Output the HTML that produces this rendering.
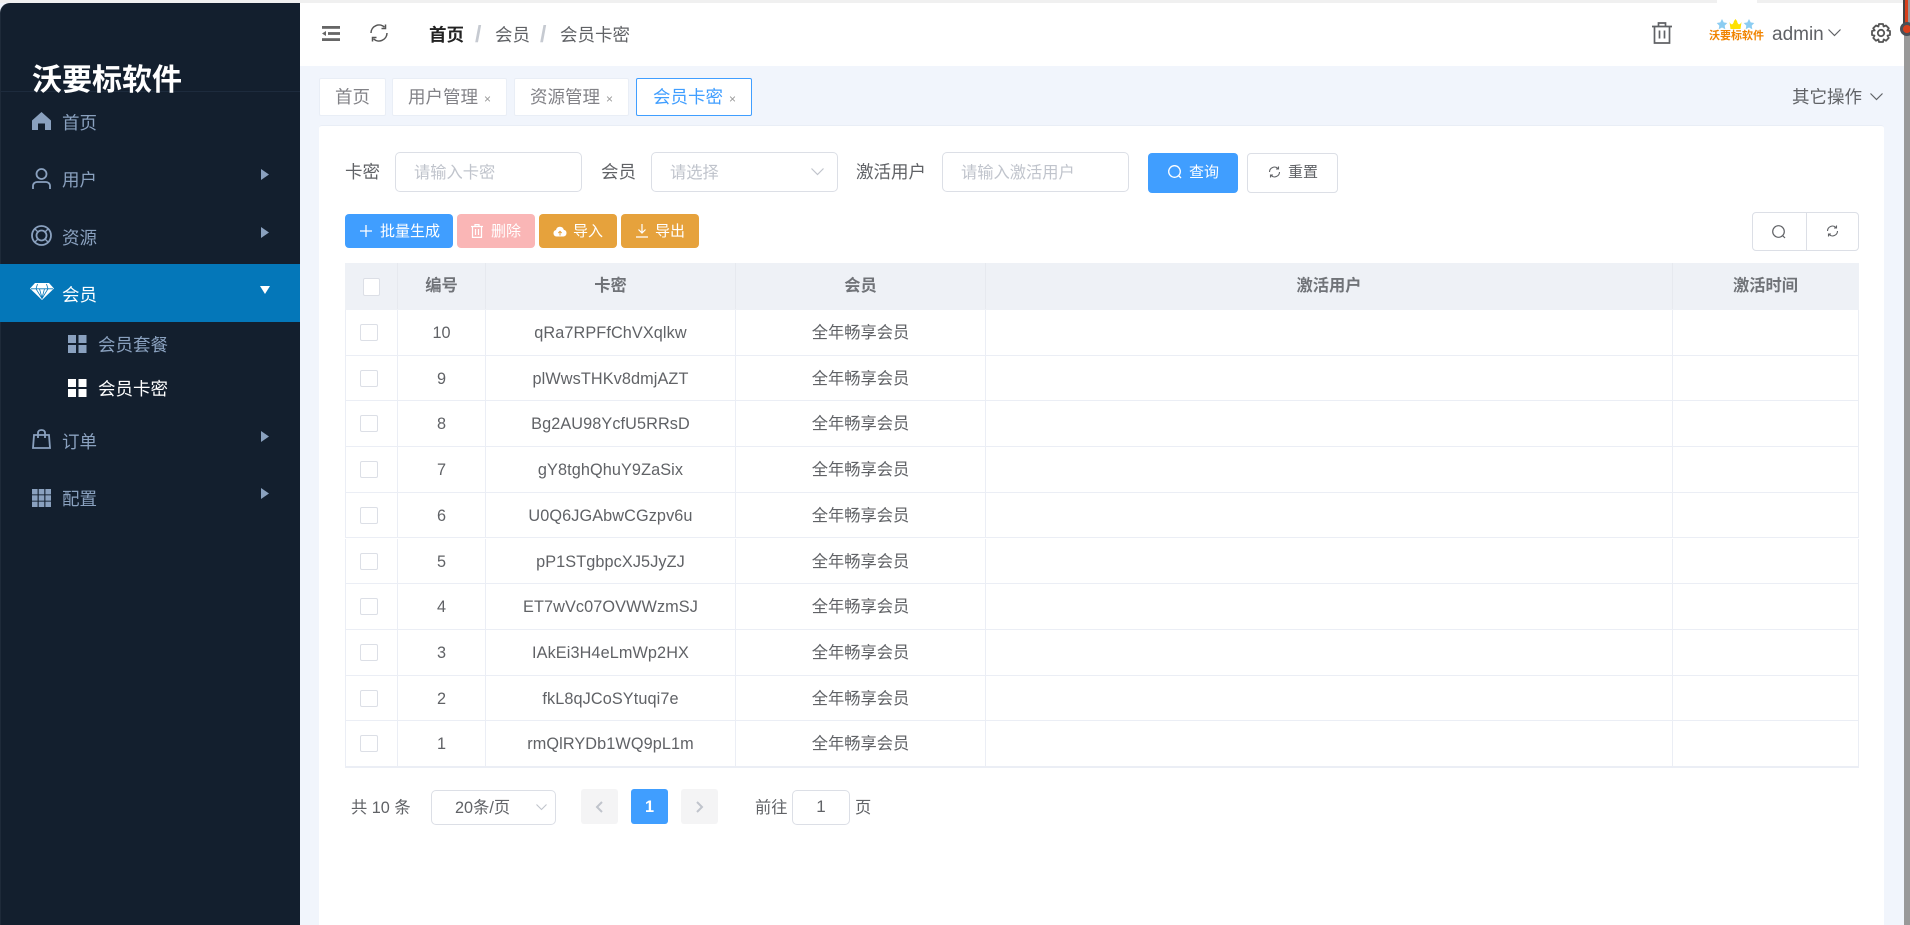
<!DOCTYPE html>
<html lang="zh-CN"><head><meta charset="utf-8"><title>沃要标软件</title>
<style>
*{box-sizing:border-box}
html,body{margin:0;padding:0;width:1910px;height:925px;overflow:hidden;background:#f1f5fc;font-family:"Liberation Sans","Noto Sans CJK SC",sans-serif;color:#606266}
.a{position:absolute}
.t{position:absolute;white-space:nowrap;line-height:24px;font-size:17.5px}
svg{position:absolute;display:block;overflow:visible}
.m{color:#8aa1bf}
.tab{position:absolute;top:78px;height:38px;background:#fff;border:1px solid #e9eef6;border-radius:2px}
.x{position:absolute;font-size:12px;color:#999;top:92px;line-height:14px}
.inp{position:absolute;background:#fff;border:1px solid #dcdfe6;border-radius:5px}
.ph{color:#c0c4cc;font-size:16.25px}
.btn{position:absolute;top:214px;height:34px;border-radius:4px}
.bt{position:absolute;top:220px;color:#fff;font-size:15px;line-height:24px;white-space:nowrap}
.row{position:absolute;left:345px;width:1514px;height:45.7px;border-bottom:1px solid #ebeef5;background:#fff;border-left:1px solid #ebeef5;border-right:1px solid #ebeef5}
.c{position:absolute;top:0;height:100%;text-align:center;font-size:16.25px;line-height:46px;color:#606266;white-space:nowrap;border-right:1px solid #ebeef5}
.c1{left:0;width:52px}.c2{left:52px;width:88px}.c3{left:140px;width:250px;letter-spacing:.1px}.c4{left:390px;width:250px}.c5{left:640px;width:687px}.c6{left:1326px;width:187px;border-right:0}
.cb{position:absolute;left:14px;top:14px;width:18px;height:17px;border:1px solid #dcdfe6;border-radius:2px;background:#fff}
.head .c{font-weight:bold;color:#707378;line-height:47px;border-right-color:#e6e9ef;letter-spacing:0}
</style></head><body>

<!-- top strip -->
<div class="a" style="left:0;top:0;width:1910px;height:3px;background:#f0f0f0"></div>
<div class="a" style="left:1717px;top:0;width:40px;height:3px;background:#fff"></div>
<!-- header -->
<div class="a" style="left:300px;top:3px;width:1604px;height:63px;background:#fff"></div>
<!-- sidebar -->
<div class="a" style="left:0;top:3px;width:300px;height:922px;background:#131f2e;border-top-left-radius:10px;border-left:1px solid #1e2a39"></div>
<div class="a" style="left:1px;top:91px;width:299px;height:1px;background:#1d2b3d"></div>
<div class="t" style="left:32px;top:63px;font-size:30px;line-height:36px;font-weight:bold;color:#fff">沃要标软件</div>

<!-- menu -->
<svg style="left:32px;top:112px" width="19" height="18" viewBox="0 0 19 18"><path d="M9.5 0L19 8.5V18H13V11.5H6V18H0V8.5Z" fill="#8aa1bf"/></svg>
<div class="t m" style="left:62px;top:111px">首页</div>

<svg style="left:32px;top:168px" width="19" height="21" viewBox="0 0 19 21" fill="none" stroke="#8aa1bf" stroke-width="1.8"><circle cx="9.5" cy="6" r="5"/><path d="M1 21V18C1 15.5 3 14 5 14H14C16 14 18 15.5 18 18V21"/></svg>
<div class="t m" style="left:62px;top:168px">用户</div>
<svg style="left:261px;top:169px" width="8" height="11" viewBox="0 0 8 11"><path d="M0 0L8 5.5L0 11Z" fill="#8aa1bf"/></svg>

<svg style="left:31px;top:225px" width="21" height="21" viewBox="0 0 21 21" fill="none" stroke="#8aa1bf" stroke-width="1.8"><circle cx="10.5" cy="10.5" r="9.5"/><circle cx="10.5" cy="10.5" r="5"/><path d="M4 4L7 7M17 4L14 7M4 17L7 14M17 17L14 14" stroke-width="1.4"/></svg>
<div class="t m" style="left:62px;top:226px">资源</div>
<svg style="left:261px;top:227px" width="8" height="11" viewBox="0 0 8 11"><path d="M0 0L8 5.5L0 11Z" fill="#8aa1bf"/></svg>

<div class="a" style="left:0;top:264px;width:300px;height:58px;background:#0477b9"></div>
<svg style="left:30px;top:283px" width="24" height="17" viewBox="0 0 24 17"><path d="M5 0H19L24 5.5L12 17L0 5.5Z" fill="#fff"/><path d="M1 5.8H23M7.5 1L6 5.8L12 15.5L18 5.8L16.5 1M9.5 5.8L12 15M14.500 5.8L12 15" stroke="#0477b9" stroke-width=".8" fill="none"/></svg>
<div class="t" style="left:62px;top:283px;color:#fff">会员</div>
<svg style="left:260px;top:286px" width="10" height="8" viewBox="0 0 10 8"><path d="M0 0H10L5 8Z" fill="#fff"/></svg>

<svg style="left:68px;top:335px" width="19" height="18" viewBox="0 0 19 18" fill="#8aa1bf"><rect width="8" height="8"/><rect x="10.5" width="8" height="8"/><rect y="10" width="8" height="8"/><rect x="10.5" y="10" width="8" height="8"/></svg>
<div class="t m" style="left:98px;top:333px">会员套餐</div>
<svg style="left:68px;top:379px" width="19" height="18" viewBox="0 0 19 18" fill="#fff"><rect width="8" height="8"/><rect x="10.5" width="8" height="8"/><rect y="10" width="8" height="8"/><rect x="10.5" y="10" width="8" height="8"/></svg>
<div class="t" style="left:98px;top:377px;color:#fff">会员卡密</div>

<svg style="left:32px;top:429px" width="19" height="20" viewBox="0 0 19 20" fill="none" stroke="#8aa1bf" stroke-width="1.8"><path d="M2 6H17L18 19H1Z"/><path d="M6 9V4C6 2 7.5 1 9.5 1S13 2 13 4V9"/></svg>
<div class="t m" style="left:62px;top:430px">订单</div>
<svg style="left:261px;top:431px" width="8" height="11" viewBox="0 0 8 11"><path d="M0 0L8 5.5L0 11Z" fill="#8aa1bf"/></svg>

<svg style="left:32px;top:489px" width="19" height="18" viewBox="0 0 19 18" fill="#8aa1bf"><rect width="5.6" height="5.400"/><rect x="6.700" width="5.600" height="5.400"/><rect x="13.400" width="5.600" height="5.400"/><rect y="6.300" width="5.600" height="5.400"/><rect x="6.700" y="6.300" width="5.600" height="5.400"/><rect x="13.400" y="6.300" width="5.600" height="5.400"/><rect y="12.600" width="5.600" height="5.400"/><rect x="6.700" y="12.600" width="5.600" height="5.400"/><rect x="13.400" y="12.600" width="5.600" height="5.400"/></svg>
<div class="t m" style="left:62px;top:487px">配置</div>
<svg style="left:261px;top:488px" width="8" height="11" viewBox="0 0 8 11"><path d="M0 0L8 5.5L0 11Z" fill="#8aa1bf"/></svg>

<!-- header contents -->
<svg style="left:322px;top:26px" width="18" height="15" viewBox="0 0 18 15" fill="#666"><rect width="18" height="2.800"/><rect x="6" y="6.100" width="12" height="2.800"/><rect y="12.200" width="18" height="2.800"/><path d="M0 7.500L4 5V10Z"/></svg>
<svg style="left:370px;top:24px" width="18" height="18" viewBox="0 0 18 18" fill="none" stroke="#555" stroke-width="1.5"><path d="M1 9A8 8 0 0 1 14.5 3.2"/><path d="M17 9A8 8 0 0 1 3.5 14.8"/><path d="M15.5 0.5V4.5H11.5"/><path d="M2.5 17.5V13.5H6.5"/></svg>
<div class="t" style="left:429px;top:22.5px;font-weight:bold;color:#222">首页</div>
<div class="t" style="left:475px;top:22px;font-size:23px;color:#c6cad1;font-weight:bold">/</div>
<div class="t" style="left:495px;top:22.5px">会员</div>
<div class="t" style="left:540px;top:22px;font-size:23px;color:#c6cad1;font-weight:bold">/</div>
<div class="t" style="left:560px;top:22.5px">会员卡密</div>

<svg style="left:1652px;top:22px" width="20" height="22" viewBox="0 0 20 22" fill="none" stroke="#606266" stroke-width="1.7"><path d="M0 4.5H20M6.5 4V1H13.5V4M2.5 4.5V21H17.500V4.5M7.500 8.500V16.500M12.500 8.500V16.500"/></svg>

<!-- logo -->
<svg style="left:1718px;top:19px" width="40" height="12" viewBox="0 0 40 12"><path d="M4 0L5.700 3.400L9.300 4L6.700 6.600L7.300 10.300L4 8.500L.7 10.300L1.300 6.600L-1.300 4L2.300 3.400Z" fill="#8ccdf2"/><path d="M31 0L32.700 3.400L36.300 4L33.700 6.600L34.300 10.300L31 8.500L27.700 10.300L28.300 6.600L25.700 4L29.300 3.400Z" fill="#8ccdf2"/><path d="M11.500 3C13 6 15 6.500 16 2L17.500 0L19 2C20 6.500 22 6 23.500 3L22.500 10H12.500Z" fill="#ffe100"/></svg>
<div class="t" style="left:1709px;top:29px;font-size:11px;line-height:14px;font-weight:bold;color:#f08300">沃要标软件</div>
<div class="t" style="left:1772px;top:22.5px;font-size:19px;color:#606266">admin</div>
<svg style="left:1828px;top:29px" width="13" height="8" viewBox="0 0 13 8" fill="none" stroke="#606266" stroke-width="1.200"><path d="M0.500 0.500L6.500 6.500L12.500 0.500"/></svg>
<svg style="left:1871px;top:23px" width="20" height="20" viewBox="0 0 20 20" fill="none" stroke="#555" stroke-width="1.800"><circle cx="10" cy="10" r="3.200"/><path d="M8 1H12L12.600 3.500L15 2.500L17.800 5.300L16.300 7.400L19 8V12L16.500 12.600L17.700 15L15 17.700L12.700 16.400L12 19H8L7.400 16.400L5 17.700L2.300 15L3.500 12.600L1 12V8L3.700 7.400L2.200 5.300L5 2.500L7.400 3.500Z" stroke-linejoin="round"/></svg>

<!-- right edge -->
<div class="a" style="left:1904px;top:0;width:6px;height:925px;background:#999"></div>
<div class="a" style="left:1903px;top:0;width:2px;height:30px;background:#444"></div>
<div class="a" style="left:1905px;top:0;width:3px;height:30px;background:#d8401c"></div>
<div class="a" style="left:1900px;top:22px;width:14px;height:14px;border-radius:7px;background:#d8401c;border:3px solid #4a5058"></div>

<!-- tabs -->
<div class="tab" style="left:319px;width:67px"></div>
<div class="t" style="left:335px;top:85px;color:#828287">首页</div>
<div class="tab" style="left:392px;width:115px"></div>
<div class="t" style="left:408px;top:85px;color:#828287">用户管理</div><div class="x" style="left:484px">×</div>
<div class="tab" style="left:514px;width:115px"></div>
<div class="t" style="left:530px;top:85px;color:#828287">资源管理</div><div class="x" style="left:606px">×</div>
<div class="tab" style="left:636px;width:116px;border-color:#409eff"></div>
<div class="t" style="left:653px;top:85px;color:#409eff">会员卡密</div><div class="x" style="left:729px">×</div>
<div class="t" style="left:1792px;top:85px">其它操作</div>
<svg style="left:1870px;top:93px" width="13" height="8" viewBox="0 0 13 8" fill="none" stroke="#606266" stroke-width="1.200"><path d="M0.500 0.500L6.500 6.500L12.500 0.500"/></svg>

<!-- card -->
<div class="a" style="left:319px;top:125px;width:1565px;height:800px;background:#fff;border-top:1px solid #e9eef6;border-radius:3px 3px 0 0"></div>

<!-- filter form -->
<div class="t" style="left:345px;top:160px">卡密</div>
<div class="inp" style="left:395px;top:152px;width:187px;height:40px"></div>
<div class="t ph" style="left:414px;top:161px">请输入卡密</div>
<div class="t" style="left:601px;top:160px">会员</div>
<div class="inp" style="left:651px;top:152px;width:187px;height:40px"></div>
<div class="t ph" style="left:670px;top:161px">请选择</div>
<svg style="left:811px;top:168px" width="13" height="8" viewBox="0 0 13 8" fill="none" stroke="#c0c4cc" stroke-width="1.200"><path d="M0.500 0.500L6.500 6.500L12.500 0.500"/></svg>
<div class="t" style="left:856px;top:160px">激活用户</div>
<div class="inp" style="left:942px;top:152px;width:187px;height:40px"></div>
<div class="t ph" style="left:961px;top:161px">请输入激活用户</div>

<div class="a" style="left:1148px;top:153px;width:90px;height:40px;background:#409eff;border-radius:4px"></div>
<svg style="left:1168px;top:165px" width="14" height="14" viewBox="0 0 14 14" fill="none" stroke="#fff" stroke-width="1.300"><circle cx="6.500" cy="6.500" r="5.800"/><path d="M10.500 10.500L13 13"/></svg>
<div class="t" style="left:1189px;top:161px;font-size:15px;color:#fff">查询</div>
<div class="a" style="left:1247px;top:153px;width:91px;height:40px;background:#fff;border:1px solid #dcdfe6;border-radius:4px"></div>
<svg style="left:1269px;top:166px" width="11" height="12" viewBox="0 0 11 12" fill="none" stroke="#606266" stroke-width="1.100"><path d="M0.500 6A5 5 0 0 1 9 2.500"/><path d="M10.500 6A5 5 0 0 1 2 9.500"/><path d="M9.500 0.500V3H7"/><path d="M1.500 11.500V9H4"/></svg>
<div class="t" style="left:1288px;top:161px;font-size:15px">重置</div>

<!-- action buttons -->
<div class="btn" style="left:345px;width:108px;background:#409eff"></div>
<svg style="left:360px;top:225px" width="12" height="12" viewBox="0 0 12 12" stroke="#fff" stroke-width="1.300"><path d="M6 0V12M0 6H12"/></svg>
<div class="bt" style="left:380px">批量生成</div>
<div class="btn" style="left:457px;width:78px;background:#fab6b6"></div>
<svg style="left:471px;top:224px" width="12" height="14" viewBox="0 0 12 14" fill="none" stroke="#fff" stroke-width="1.200"><path d="M0 2.500H12M4 2V.6H8V2M1.500 2.500V13.400H10.500V2.500M4.500 5V11M7.500 5V11"/></svg>
<div class="bt" style="left:491px">删除</div>
<div class="btn" style="left:539px;width:78px;background:#e6a23c"></div>
<svg style="left:553px;top:226px" width="14" height="11" viewBox="0 0 14 11"><path d="M3.500 10.500A3.300 3.300 0 0 1 3 4A4 4 0 0 1 10.800 3.800A3.400 3.400 0 0 1 10.500 10.500Z" fill="#fff"/><path d="M7 9.500V5.500M5.300 7L7 5.300L8.700 7" stroke="#e6a23c" fill="none"/></svg>
<div class="bt" style="left:573px">导入</div>
<div class="btn" style="left:621px;width:78px;background:#e6a23c"></div>
<svg style="left:636px;top:224px" width="12" height="14" viewBox="0 0 12 14" fill="none" stroke="#fff" stroke-width="1.200"><path d="M6 0V9M2.500 5.500L6 9L9.500 5.500M0 13H12"/></svg>
<div class="bt" style="left:655px">导出</div>

<!-- tool group -->
<div class="a" style="left:1752px;top:212px;width:107px;height:39px;background:#fff;border:1px solid #dcdfe6;border-radius:4px"></div>
<div class="a" style="left:1806px;top:213px;width:1px;height:37px;background:#dcdfe6"></div>
<svg style="left:1772px;top:225px" width="14" height="14" viewBox="0 0 14 14" fill="none" stroke="#606266" stroke-width="1.200"><circle cx="6.500" cy="6.500" r="5.800"/><path d="M10.500 10.500L13 13"/></svg>
<svg style="left:1827px;top:225px" width="11" height="12" viewBox="0 0 11 12" fill="none" stroke="#606266" stroke-width="1.100"><path d="M0.500 6A5 5 0 0 1 9 2.500"/><path d="M10.500 6A5 5 0 0 1 2 9.500"/><path d="M9.500 0.500V3H7"/><path d="M1.500 11.500V9H4"/></svg>

<!-- table -->
<div class="row head" style="top:263px;height:47px;background:#eef1f6;border-color:#eef1f6">
<div class="c c1"><div class="cb" style="left:17px;top:15px;width:17px;height:18px"></div></div><div class="c c2">编号</div><div class="c c3">卡密</div><div class="c c4">会员</div><div class="c c5">激活用户</div><div class="c c6">激活时间</div></div>
<div class="row" style="top:310px"><div class="c c1"><div class="cb"></div></div><div class="c c2">10</div><div class="c c3">qRa7RPFfChVXqlkw</div><div class="c c4">全年畅享会员</div><div class="c c5"></div><div class="c c6"></div></div>
<div class="row" style="top:355.7px"><div class="c c1"><div class="cb"></div></div><div class="c c2">9</div><div class="c c3">plWwsTHKv8dmjAZT</div><div class="c c4">全年畅享会员</div><div class="c c5"></div><div class="c c6"></div></div>
<div class="row" style="top:401.4px"><div class="c c1"><div class="cb"></div></div><div class="c c2">8</div><div class="c c3">Bg2AU98YcfU5RRsD</div><div class="c c4">全年畅享会员</div><div class="c c5"></div><div class="c c6"></div></div>
<div class="row" style="top:447.1px"><div class="c c1"><div class="cb"></div></div><div class="c c2">7</div><div class="c c3">gY8tghQhuY9ZaSix</div><div class="c c4">全年畅享会员</div><div class="c c5"></div><div class="c c6"></div></div>
<div class="row" style="top:492.8px"><div class="c c1"><div class="cb"></div></div><div class="c c2">6</div><div class="c c3">U0Q6JGAbwCGzpv6u</div><div class="c c4">全年畅享会员</div><div class="c c5"></div><div class="c c6"></div></div>
<div class="row" style="top:538.5px"><div class="c c1"><div class="cb"></div></div><div class="c c2">5</div><div class="c c3">pP1STgbpcXJ5JyZJ</div><div class="c c4">全年畅享会员</div><div class="c c5"></div><div class="c c6"></div></div>
<div class="row" style="top:584.2px"><div class="c c1"><div class="cb"></div></div><div class="c c2">4</div><div class="c c3">ET7wVc07OVWWzmSJ</div><div class="c c4">全年畅享会员</div><div class="c c5"></div><div class="c c6"></div></div>
<div class="row" style="top:629.9px"><div class="c c1"><div class="cb"></div></div><div class="c c2">3</div><div class="c c3">IAkEi3H4eLmWp2HX</div><div class="c c4">全年畅享会员</div><div class="c c5"></div><div class="c c6"></div></div>
<div class="row" style="top:675.6px"><div class="c c1"><div class="cb"></div></div><div class="c c2">2</div><div class="c c3">fkL8qJCoSYtuqi7e</div><div class="c c4">全年畅享会员</div><div class="c c5"></div><div class="c c6"></div></div>
<div class="row" style="top:721.3px;height:46.7px;border-bottom:2px solid #ebeef5"><div class="c c1"><div class="cb"></div></div><div class="c c2">1</div><div class="c c3">rmQlRYDb1WQ9pL1m</div><div class="c c4">全年畅享会员</div><div class="c c5"></div><div class="c c6"></div></div>

<!-- pagination -->
<div class="t" style="left:351px;top:796px;font-size:16.25px">共 10 条</div>
<div class="inp" style="left:431px;top:790px;width:125px;height:35px"></div>
<div class="t" style="left:455px;top:796px;font-size:16.25px">20条/页</div>
<svg style="left:536px;top:804px" width="11" height="7" viewBox="0 0 11 7" fill="none" stroke="#c0c4cc" stroke-width="1.100"><path d="M0.500 0.500L5.500 5.500L10.500 0.500"/></svg>
<div class="a" style="left:581px;top:789px;width:37px;height:35px;background:#f4f4f5;border-radius:3px"></div>
<svg style="left:596px;top:801px" width="7" height="12" viewBox="0 0 7 12" fill="none" stroke="#c0c4cc" stroke-width="2"><path d="M6 1L1 6L6 11"/></svg>
<div class="a" style="left:631px;top:789px;width:37px;height:35px;background:#409eff;border-radius:3px"></div>
<div class="t" style="left:631px;top:795px;width:37px;text-align:center;font-size:16.25px;font-weight:bold;color:#fff">1</div>
<div class="a" style="left:681px;top:789px;width:37px;height:35px;background:#f4f4f5;border-radius:3px"></div>
<svg style="left:696px;top:801px" width="7" height="12" viewBox="0 0 7 12" fill="none" stroke="#c0c4cc" stroke-width="2"><path d="M1 1L6 6L1 11"/></svg>
<div class="t" style="left:755px;top:796px;font-size:16.25px">前往</div>
<div class="inp" style="left:792px;top:790px;width:58px;height:35px"></div>
<div class="t" style="left:792px;top:795px;width:58px;text-align:center;font-size:17px">1</div>
<div class="t" style="left:855px;top:796px;font-size:16.25px">页</div>

</body></html>
